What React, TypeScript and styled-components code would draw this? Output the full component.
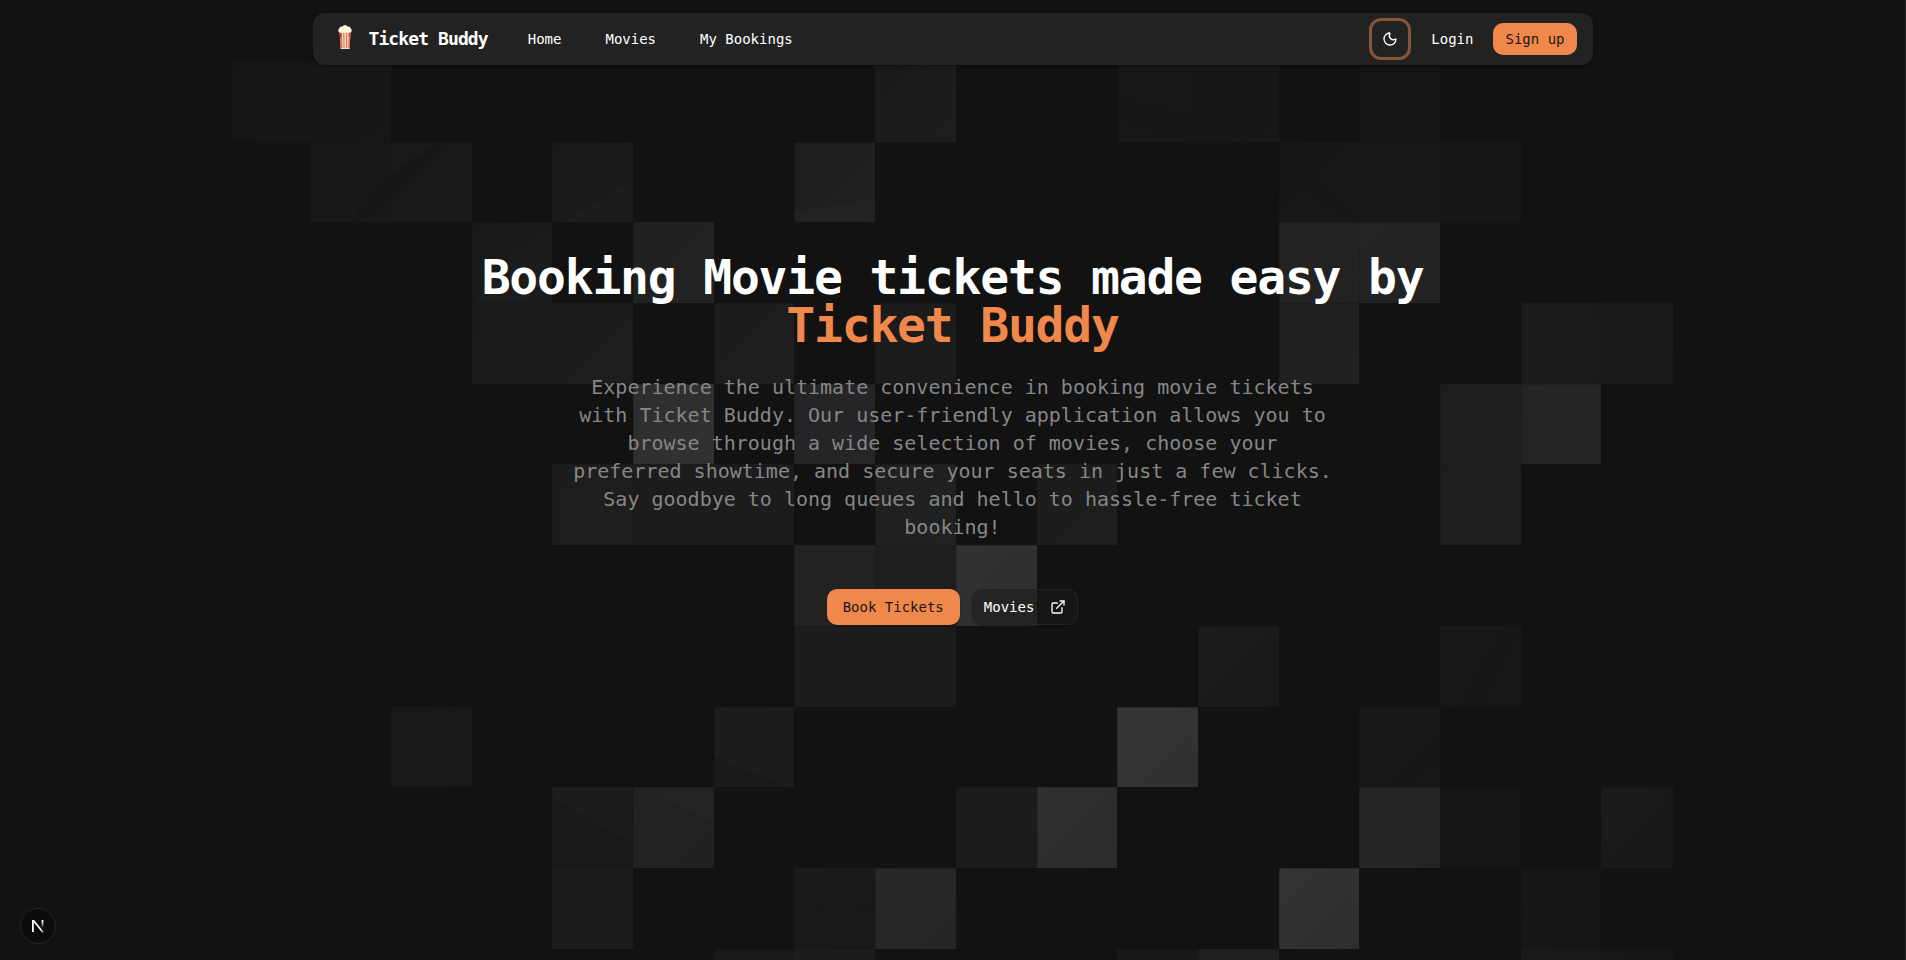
import React from "react";
import styled, { createGlobalStyle, css } from "styled-components";
import { ExternalLink, Moon } from "lucide-react";

const GlobalStyle = createGlobalStyle`
  *, *::before, *::after { box-sizing: border-box; }
  body {
    margin: 0;
    background: #121212;
    color: #ffffff;
    font-family: "DejaVu Sans Mono", "Liberation Mono", monospace;
    font-size: 14px;
    line-height: 20px;
  }
  a { color: inherit; text-decoration: none; }
`;

const Page = styled.div`
  position: relative;
  min-height: 100vh;
  overflow: hidden;
  border-right: 1px solid #2a2a2a;
`;

const Backdrop = styled.svg`
  position: absolute;
  top: 62px;
  left: 50%;
  width: 1440px;
  height: 898px;
  margin-left: -720px;
  pointer-events: none;
`;

const Header = styled.header`
  position: relative;
  padding: 13px 16px 0;
`;

const Bar = styled.nav`
  display: flex;
  align-items: center;
  max-width: 1280px;
  height: 52px;
  margin: 0 auto;
  padding: 0 16px;
  border-radius: 12px;
  background: #222222;
  box-shadow: 0 2px 4px rgba(0, 0, 0, 0.35);
`;

const Brand = styled.a`
  display: flex;
  align-items: center;
  gap: 8px;
  font-size: 18px;
  font-weight: 700;
  letter-spacing: -0.05em;
`;

const NavLinks = styled.ul`
  display: flex;
  gap: 44px;
  margin: 0 0 0 40px;
  padding: 0;
  list-style: none;
`;

const Actions = styled.div`
  display: flex;
  align-items: center;
  gap: 8px;
  margin-left: auto;
`;

const ThemeToggle = styled.button`
  display: flex;
  align-items: center;
  justify-content: center;
  width: 42px;
  height: 42px;
  padding: 0;
  border: 3px solid #865538;
  border-radius: 12px;
  background: #222222;
  color: #ffffff;
`;

const Button = styled.button<{ $variant: "primary" | "outline" | "ghost"; $size?: "lg" }>`
  display: inline-flex;
  align-items: center;
  justify-content: center;
  gap: 16px;
  height: ${(p) => (p.$size === "lg" ? 36 : 32)}px;
  padding: 0 ${(p) => (p.$size === "lg" && p.$variant === "primary" ? 16 : 12)}px;
  border: 0;
  border-radius: 10px;
  font: inherit;
  color: #ffffff;
  background: transparent;
  cursor: pointer;
  ${(p) =>
    p.$variant === "primary" &&
    css`
      background: #ef884a;
      color: #1a1614;
    `}
  ${(p) =>
    p.$variant === "outline" &&
    css`
      padding: 0 11px;
      border: 1px solid #242424;
      background: rgba(26, 26, 28, 0.5);
    `}
  ${(p) => p.$size === "lg" && "box-shadow: 0 1px 2px rgba(0, 0, 0, 0.35);"}
`;

const Hero = styled.main`
  position: relative;
  display: flex;
  flex-direction: column;
  align-items: center;
  padding: 188px 16px 64px;
  text-align: center;
`;

const Title = styled.h1`
  max-width: 1024px;
  margin: 0;
  font-size: 48px;
  line-height: 48px;
  font-weight: 700;
  letter-spacing: -0.025em;
`;

const Accent = styled.span`
  display: block;
  color: #ef884a;
`;

const Lead = styled.p`
  max-width: 768px;
  margin: 24px 0 48px;
  font-size: 20px;
  line-height: 28px;
  color: #868686;
`;

const CtaRow = styled.div`
  display: flex;
  flex-wrap: wrap;
  justify-content: center;
  gap: 12px;
`;

const DevBadge = styled.button`
  position: fixed;
  left: 20px;
  bottom: 16px;
  display: flex;
  align-items: center;
  justify-content: center;
  width: 36px;
  height: 36px;
  padding: 0;
  border: 1px solid #272727;
  border-radius: 50%;
  background: #0c0c0c;
`;

const columns = [0, 77, 158, 239, 319, 400, 481, 561, 642, 723, 804, 884, 965, 1046, 1126, 1207, 1288, 1368, 1440];
const rows = [0, 80, 160, 241, 322, 402, 483, 564, 645, 725, 806, 887, 968];

// [column, row, top-left tone, bottom-right tone]
type Tile = [number, number, string, string];
const tiles: Tile[] = [
  [0, 0, "#151515", "#161616"], [1, 0, "#161616", "#171717"], [8, 0, "#1a1a1a", "#1e1e1e"],
  [11, 0, "#171717", "#171717"], [12, 0, "#161616", "#171717"], [14, 0, "#151515", "#161616"],
  [1, 1, "#171717", "#191919"], [2, 1, "#191919", "#191919"], [4, 1, "#191919", "#1b1b1b"],
  [7, 1, "#1d1d1d", "#212121"], [13, 1, "#161616", "#181818"], [14, 1, "#171717", "#171717"],
  [15, 1, "#161616", "#161616"],
  [3, 2, "#191919", "#1c1c1c"], [5, 2, "#202020", "#232323"], [13, 2, "#232323", "#222222"],
  [14, 2, "#242424", "#222222"],
  [3, 3, "#1b1b1b", "#1d1d1d"], [4, 3, "#1c1c1c", "#1e1e1e"], [6, 3, "#1c1c1c", "#1f1f1f"],
  [8, 3, "#1b1b1b", "#1c1c1c"], [13, 3, "#1f1f1f", "#222222"], [16, 3, "#1c1c1c", "#1b1b1b"],
  [17, 3, "#1b1b1b", "#191919"],
  [5, 4, "#2d2d2d", "#323232"], [7, 4, "#242426", "#262628"], [15, 4, "#1e1e1e", "#1e1e1e"],
  [16, 4, "#252525", "#242424"],
  [4, 5, "#1d1d1d", "#1e1e1e"], [5, 5, "#1c1c1c", "#1c1c1c"], [6, 5, "#1c1c1c", "#1c1c1c"],
  [8, 5, "#1f1f1f", "#222222"], [10, 5, "#1c1c1c", "#1e1e1e"], [15, 5, "#1e1e1e", "#1e1e1e"],
  [7, 6, "#222222", "#232323"], [8, 6, "#1e1e1e", "#1d1d1d"], [9, 6, "#323232", "#2e2e2e"],
  [7, 7, "#1d1d1d", "#1c1c1c"], [8, 7, "#1c1c1c", "#1c1c1c"], [12, 7, "#1c1c1c", "#1a1a1a"],
  [15, 7, "#181818", "#171717"],
  [2, 8, "#1a1a1a", "#191919"], [6, 8, "#1d1d1d", "#1c1c1c"], [11, 8, "#353535", "#313131"],
  [14, 8, "#181818", "#171717"],
  [4, 9, "#1a1a1a", "#191919"], [5, 9, "#232323", "#212121"], [9, 9, "#1c1c1c", "#1b1b1b"],
  [10, 9, "#303030", "#2c2c2c"], [14, 9, "#252527", "#242424"], [15, 9, "#161616", "#151515"],
  [17, 9, "#1a1a1a", "#181818"],
  [4, 10, "#1d1d1d", "#1d1d1d"], [7, 10, "#1b1b1b", "#181818"], [8, 10, "#28282a", "#252525"],
  [13, 10, "#343434", "#2e2e2e"], [16, 10, "#161616", "#151515"],
  [6, 11, "#191919", "#191919"], [7, 11, "#1d1d1d", "#1d1d1d"], [11, 11, "#181818", "#181818"],
  [12, 11, "#202020", "#202020"], [16, 11, "#1a1a1a", "#191919"], [17, 11, "#171717", "#161616"],
];

// Bands of slightly different tone that cross the tiles: [outline, colour]
const bands: [string, string][] = [
  ["M114 160 L158 112 L206 80 L214 80 L158 136 L130 160Z", "#161616"],
  ["M331 160 Q365 138 399 121 L399 160Z", "#1d1d1d"],
  ["M562 150 L641 136 L641 159 L562 159Z", "#222222"],
  ["M884 38 Q965 55 1015 80 L960 80 L884 56Z", "#161616"],
  ["M1046 98 Q1100 130 1126 160 L1120 160 Q1080 130 1046 116Z", "#161616"],
  ["M1046 242 L1062 242 Q1100 282 1125 315 L1125 320 L1047 320Z", "#212121"],
  ["M1359 242 L1368 242 L1397 320 L1369 320 L1368 282Z", "#1b1b1b"],
  ["M239 241 Q275 185 319 166 L319 240Z", "#1c1c1c"],
  ["M346 320 Q370 280 399 262 L399 320Z", "#1e1e1e"],
  ["M973 643 Q1015 617 1045 577 L1045 643Z", "#191919"],
  ["M1227 643 L1269 565 L1286 565 L1250 643Z", "#161616"],
  ["M1151 724 Q1180 704 1205 671 L1205 698 L1176 724Z", "#161616"],
  ["M481 694 Q520 712 555 724 L482 724Z", "#1a1a1a"],
  ["M320 736 L398 782 L398 726 L320 726Z", "#1c1c1c"],
  ["M407 726 L480 761 L480 726Z", "#242424"],
  ["M562 838 Q600 846 641 850 L641 886 L562 886Z", "#191919"],
  ["M1369 785 L1420 727 L1369 727Z", "#1b1b1b"],
];

function TileBackdrop() {
  return (
    <Backdrop viewBox="0 0 1440 898" aria-hidden="true">
      {tiles.map(([c, r, from, to]) => (
        <g key={`${c}-${r}`}>
          <linearGradient id={`tile-${c}-${r}`} x1="0" y1="0" x2="1" y2="1">
            <stop offset="0" stopColor={from} />
            <stop offset="1" stopColor={to} />
          </linearGradient>
          <rect
            x={columns[c]}
            y={rows[r]}
            width={columns[c + 1] - columns[c]}
            height={rows[r + 1] - rows[r]}
            fill={`url(#tile-${c}-${r})`}
          />
        </g>
      ))}
      {bands.map(([d, fill]) => (
        <path key={d} d={d} fill={fill} />
      ))}
      <g stroke="#151515" strokeOpacity="0.3">
        {columns.slice(1, -1).map((x) => (
          <line key={x} x1={x + 0.5} x2={x + 0.5} y1="0" y2="898" />
        ))}
        {rows.slice(1, -1).map((y) => (
          <line key={y} x1="0" x2="1440" y1={y + 0.5} y2={y + 0.5} />
        ))}
      </g>
    </Backdrop>
  );
}

function PopcornLogo() {
  return (
    <svg width="32" height="28" viewBox="0 0 32 28" aria-hidden="true">
      <path d="M10.6 7h11L20.4 24h-8.6z" fill="#fbe0b4" />
      <path
        d="M10.6 7h2.2l.6 16h-1.7zM14.2 7h1.2l.1 16h-1zM17 7h1.2l-.3 16h-1zM19.8 7h1.8l-1.1 16h-1.4z"
        fill="#ec6a5e"
      />
      <path d="M10.4 7h2l.3 5h-1.9zM19.9 7h1.8l-.4 5h-1.6z" fill="#a3532c" />
      <path d="M11.8 23h8.7v1h-8.7z" fill="#e9e3da" />
      <path
        d="M11.6 7.8a2.4 2.4 0 0 1-1.4-4.3 2.6 2.6 0 0 1 3.2-1.9 3 3 0 0 1 5.2 0 2.6 2.6 0 0 1 3.2 1.9 2.4 2.4 0 0 1-1.4 4.3z"
        fill="#fdf6dc"
      />
    </svg>
  );
}

function NextMark() {
  return (
    <svg width="14" height="14" viewBox="0 0 14 14" fill="none" aria-hidden="true">
      <defs>
        <linearGradient id="next-stem" x1="0" y1="0" x2="0" y2="1">
          <stop offset="0.2" stopColor="#ffffff" />
          <stop offset="1" stopColor="#ffffff" stopOpacity="0" />
        </linearGradient>
        <linearGradient id="next-diagonal" x1="0" y1="0" x2="1" y2="1">
          <stop offset="0.75" stopColor="#ffffff" />
          <stop offset="1" stopColor="#ffffff" stopOpacity="0.3" />
        </linearGradient>
      </defs>
      <rect x="1" y="1" width="1.8" height="12" fill="#ffffff" />
      <path d="M1 1h2.2l9.6 12-1.4 1z" fill="url(#next-diagonal)" />
      <rect x="10.6" y="1" width="1.8" height="8" fill="url(#next-stem)" />
    </svg>
  );
}

const links = ["Home", "Movies", "My Bookings"];

export default function App() {
  return (
    <>
      <GlobalStyle />
      <Page>
        <TileBackdrop />
        <Header>
          <Bar aria-label="Main">
            <Brand href="#">
              <PopcornLogo />
              Ticket Buddy
            </Brand>
            <NavLinks>
              {links.map((label) => (
                <li key={label}>
                  <a href="#">{label}</a>
                </li>
              ))}
            </NavLinks>
            <Actions>
              <ThemeToggle aria-label="Toggle theme">
                <Moon size={16} />
              </ThemeToggle>
              <Button $variant="ghost">Login</Button>
              <Button $variant="primary">Sign up</Button>
            </Actions>
          </Bar>
        </Header>
        <Hero>
          <Title>
            Booking Movie tickets made easy by <Accent>Ticket Buddy</Accent>
          </Title>
          <Lead>
            Experience the ultimate convenience in booking movie tickets with Ticket Buddy. Our
            user-friendly application allows you to browse through a wide selection of movies,
            choose your preferred showtime, and secure your seats in just a few clicks. Say goodbye
            to long queues and hello to hassle-free ticket booking!
          </Lead>
          <CtaRow>
            <Button $variant="primary" $size="lg">
              Book Tickets
            </Button>
            <Button $variant="outline" $size="lg">
              Movies
              <ExternalLink size={16} />
            </Button>
          </CtaRow>
        </Hero>
        <DevBadge aria-label="Open developer tools">
          <NextMark />
        </DevBadge>
      </Page>
    </>
  );
}
